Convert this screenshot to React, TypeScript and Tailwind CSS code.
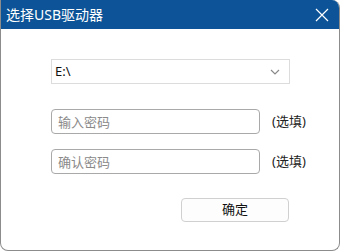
import React from 'react';

const font = { fontFamily: '"Segoe UI", "Noto Sans", "Noto Sans CJK SC", sans-serif' };

const PasswordRow: React.FC<{ placeholder: string }> = ({ placeholder }) => (
    <div className="flex flex-row items-center">
        <input
            type="password"
            placeholder={placeholder}
            className="w-[209px] h-[25px] border border-[#a9a9a9] rounded-[4px] px-[6px] text-[13px] text-[#333] placeholder:text-[#8a8a8a] outline-none bg-white"
        />
        <span className="ml-[12px] text-[13px] text-[#222]">(选填)</span>
    </div>
);

export default function App() {
    return (
        <div
            className="w-[340px] h-[251px] bg-white border-x border-b border-[#8c8c8c] rounded-tr-[8px] rounded-b-[8px] overflow-hidden flex flex-col"
            style={font}
        >
            <div className="h-[29px] bg-[#0c5497] flex flex-row items-center justify-between pl-[5px] pr-[10px] shrink-0">
                <span className="text-white text-[14px] leading-none">选择USB驱动器</span>
                <svg width="14" height="14" viewBox="0 0 14 14" className="mt-[1px]">
                    <path d="M1 1L13 13M13 1L1 13" stroke="#ffffff" strokeWidth="1.2" fill="none" />
                </svg>
            </div>

            <div className="flex flex-col pl-[50px] pt-[30px]">
                <div className="w-[239px] h-[25px] border border-[#dcdcdc] flex flex-row items-center justify-between pl-[3px] pr-[9px]">
                    <span className="text-[13px] text-[#111]">E:\</span>
                    <svg width="10" height="6" viewBox="0 0 10 6">
                        <path d="M1 1L5 5L9 1" stroke="#8a8a8a" strokeWidth="1.2" fill="none" />
                    </svg>
                </div>

                <div className="mt-[25px] flex flex-col gap-[15px]">
                    <PasswordRow placeholder="输入密码" />
                    <PasswordRow placeholder="确认密码" />
                </div>

                <div className="mt-[24px] pl-[130px]">
                    <button className="w-[108px] h-[24px] bg-[#fdfdfd] border border-[#d0d0d0] rounded-[4px] text-[13px] text-[#111] flex items-center justify-center">
                        确定
                    </button>
                </div>
            </div>
        </div>
    );
}
